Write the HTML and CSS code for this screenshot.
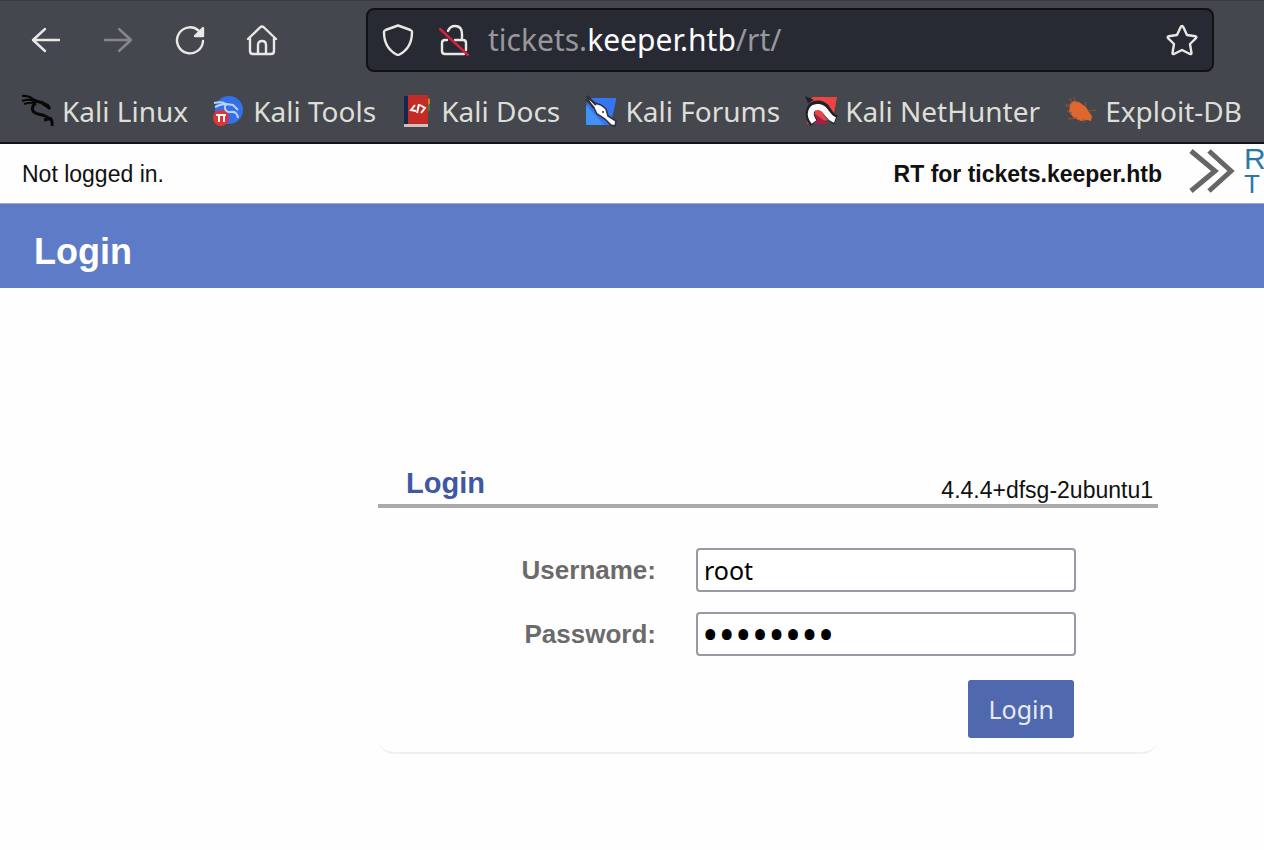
FILE: index.html
```html
<!DOCTYPE html>
<html lang="en">
<head>
<meta charset="utf-8">
<title>Login</title>
<link rel="stylesheet" href="styles.css">
</head>
<body>
<header class="chrome">
  <div class="toolbar">
    <nav class="nav-buttons" aria-label="Browser">
      <button class="icon-button" aria-label="Back"><svg viewBox="0 0 32 32" width="32" height="32"><path d="M29 16H3M15 5 3 16l12 11"/></svg></button>
      <button class="icon-button dim" aria-label="Forward" disabled><svg viewBox="0 0 32 32" width="32" height="32"><path d="M3 16h26M17 5l12 11-12 11"/></svg></button>
      <button class="icon-button" aria-label="Reload"><svg viewBox="0 0 32 32" width="32" height="32"><path d="M29 17A13 13 0 1 1 24.500 6.500"/><path class="solid" d="M29 4v8h-8z"/></svg></button>
      <button class="icon-button" aria-label="Home"><svg viewBox="0 0 32 32" width="32" height="32"><path d="M2 15 14.500 3q1.500-1.200 3 0L30 15M4 14v13q0 3 3 3h18q3 0 3-3V14M12 30V21q0-4 4-4t4 4v9"/></svg></button>
    </nav>
    <div class="address">
      <svg class="address-icon" viewBox="0 0 32 32" width="32" height="32"><path d="M16 1.500 28.500 6q1.500.6 1.500 2c0 11-4 18-12.500 22.500q-1.500.8-3 0C6 26 2 19 2 8q0-1.400 1.500-2z"/></svg>
      <svg class="address-icon" viewBox="0 0 32 32" width="32" height="32"><path d="M10 7q2-5 7-5 7 0 7 8v6M9 16H7q-3 0-3 3v8q0 3 3 3h19M17 16h8q3 0 3 3v7"/><path class="slash" d="M2 5l28 26"/></svg>
      <div class="url" role="textbox" aria-label="Address" tabindex="0">tickets.<span class="domain">keeper.htb</span>/rt/</div>
      <button class="icon-button" aria-label="Bookmark this page"><svg viewBox="0 0 32 32" width="32" height="32"><path d="M16 2q.8 0 1.300 1L21 11l8.500 1.300q1.500.5.500 1.800L24 20l1.500 9q0 1.500-1.500 1L16 26l-8 4q-1.500.5-1.500-1L8 20l-6-5.900q-1-1.300.500-1.800L11 11l3.700-8q.5-1 1.300-1z"/></svg></button>
    </div>
  </div>
  <nav class="bookmarks" aria-label="Bookmarks">
    <a class="bookmark" href="#"><svg viewBox="0 0 32 32" width="32" height="32" fill="none" stroke="#080808"><path stroke-width="2" d="M0 1q8-1 14 6M0 6q8-3 14 1M2 9q6-2 12-1"/><path stroke-width="3" d="M11 5q8 2 13 5l4 4M14 8q-5 3-3 8c3 5 12 2 16 8l-5 1M27 23q4 1 3 8"/><path fill="#080808" d="m19 6 2 4 7 4-1-4z"/></svg>Kali Linux</a>
    <a class="bookmark" href="#"><svg viewBox="0 0 32 32" width="32" height="32"><circle cx="16" cy="15" r="14" fill="#3470e8"/><path d="M1 8q8-2 12 1l7 1 5 5M2 12q8-4 12-2M12 10q-1 8 6 7 6-1 7 6" fill="none" stroke="#b9d3ff" stroke-width="2"/><circle cx="8" cy="23" r="8" fill="#df3432"/><path d="M3 20h10M6 20v7M11 20v7" stroke="#fff" stroke-width="2"/></svg>Kali Tools</a>
    <a class="bookmark" href="#"><svg viewBox="0 0 32 32" width="32" height="32"><path d="M3 1h6v29H3z" fill="#152653"/><path d="M7 0h20v29H7z" fill="#c52b25"/><path d="m27 3 2 1v5l-2 1z" fill="#c88231"/><path d="M27 10h2v5l-2 2z" fill="#37833d"/><path d="M3 29h24v3H3z" fill="#d5bdbb"/><path d="m14 10-4 5 5 1M18 9l-2 9M19 10l5 3-4 5" fill="none" stroke="#fff" stroke-width="2"/></svg>Kali Docs</a>
    <a class="bookmark" href="#"><svg viewBox="0 0 32 32" width="32" height="32"><path d="M2 3h28q2 0 1 2l-5 23q0 2-2 2H2q-2 0-1-2z" fill="#3475f4"/><path d="M1 10v18q0 2 2 2h16z" fill="#4291f7"/><path d="m2 1 3 7 4 5 3 6 8 5 6 6 4 1 1-5-8-5-2-7-5-4-6-2z" fill="#fff" stroke="#303136" stroke-width="1.500"/><path d="m2 1 9 9M1 4l8 9" stroke="#303136" stroke-width="2"/><circle cx="18" cy="17" r="1" fill="#303136"/></svg>Kali Forums</a>
    <a class="bookmark" href="#"><svg viewBox="0 0 32 32" width="32" height="32"><path d="M7 2h25l-4 22L2 29z" fill="#eb4542"/><path d="m10 19 14 10H10z" fill="#a51f47"/><path d="M9 28C2 20 5 9 14 10c9 1 7 11 17 15" fill="none" stroke="#202126" stroke-width="9"/><path d="M9 27C3 19 6 11 14 12c8 1 7 10 16 13" fill="none" stroke="#fff" stroke-width="6"/><path d="m0 1 9 4-6 3" fill="#202126"/></svg>Kali NetHunter</a>
    <a class="bookmark" href="#"><svg viewBox="0 0 32 32" width="32" height="32"><path d="m5 10 3-4 6 1 7 5 3 5 3 4-1 5-4-1-6 1-7-3-5-6z" fill="#dd672c"/><path d="M7 8 5 3M13 8l-5-6M20 12l1-5M23 16l8-1M5 12l-5-3M7 18l-5-2M12 23l-9 1M18 24l2 4M6 8 1 12" fill="none" stroke="#985135" stroke-width="1"/></svg>Exploit-DB</a>
  </nav>
</header>
<div class="status">
  <span>Not logged in.</span>
  <div class="brand">
    <strong>RT for tickets.keeper.htb</strong>
    <svg class="arrows" viewBox="0 0 46 44" width="46" height="44"><path d="m2 2 24 20L2 42M20 2l22 20-22 20"/></svg>
    <span class="logo"><span class="logo-top">R</span><span class="logo-bottom">T</span></span>
  </div>
</div>
<h1 class="title">Login</h1>
<main class="main">
  <section class="panel">
    <div class="panel-head">
      <h2>Login</h2>
      <span>4.4.4+dfsg-2ubuntu1</span>
    </div>
    <form class="form">
      <label for="user">Username:</label>
      <input id="user" type="text" value="root">
      <label for="pass">Password:</label>
      <input id="pass" class="secret" type="password" value="password">
      <button class="submit" type="button">Login</button>
    </form>
  </section>
</main>
</body>
</html>
```
FILE: styles.css
```css
* { box-sizing: border-box; }
body {
  margin: 0;
  background: #fefefe;
  color: #111;
  font: 23px/28px "Liberation Sans", Arial, sans-serif;
  overflow-x: hidden;
}
button { padding: 0; border: 0; background: none; }
svg { display: block; flex: none; overflow: visible; }

.chrome {
  background: #45474e;
  border-top: 1px solid #393b40;
  border-bottom: 2px solid #151518;
  font-family: "Noto Sans", sans-serif;
}
.toolbar {
  display: flex;
  align-items: center;
  gap: 88px;
  padding: 7px 50px 7px 30px;
}
.nav-buttons { display: flex; gap: 40px; }
.icon-button svg, .address-icon {
  fill: none;
  stroke: #e8e8e5;
  stroke-width: 2.4;
  stroke-linecap: round;
  stroke-linejoin: round;
}
.icon-button .solid { fill: #efefeb; }
.icon-button.dim svg { stroke: #84868a; }
.address {
  flex: 1;
  display: flex;
  align-items: center;
  height: 64px;
  padding: 0 14px;
  gap: 24px;
  border: 2px solid #111216;
  border-radius: 8px;
  background: #282a33;
}
.address-icon .slash { stroke: #d9203f; }
.url {
  flex: 1;
  margin-left: -6px;
  color: #97989b;
  font-size: 30px;
  line-height: 40px;
  white-space: nowrap;
}
.domain { color: #fbfbfe; }
.bookmarks {
  display: flex;
  align-items: center;
  justify-content: space-between;
  height: 63px;
  padding: 0 22px;
}
.bookmark {
  display: flex;
  align-items: center;
  gap: 8px;
  color: #deded9;
  font-size: 28px;
  line-height: 36px;
  text-decoration: none;
  white-space: nowrap;
}

.status {
  display: flex;
  align-items: center;
  justify-content: space-between;
  height: 60px;
  padding-left: 22px;
  border-bottom: 1px solid #aaa;
}
.brand { display: flex; align-items: center; }
.arrows { margin: 0 9px 6px 27px; fill: none; stroke: #666; stroke-width: 5; }
.logo {
  display: flex;
  flex-direction: column;
  width: 20px;
  padding-bottom: 6px;
  color: #2879a8;
}
.logo-top { font-size: 30px; line-height: 26px; }
.logo-bottom { font-size: 26px; line-height: 24px; }
.title {
  margin: 0;
  padding: 28px 34px 16px;
  background: #5e7bc7;
  color: #fff;
  font-size: 36px;
  line-height: 40px;
}

.main { padding: 178px 106px 0 378px; }
.panel {
  padding-bottom: 14px;
  border-bottom: 2px solid #efeff0;
  border-radius: 0 0 16px 16px;
}
.panel-head {
  display: flex;
  align-items: flex-end;
  justify-content: space-between;
  padding: 0 5px 0 28px;
  border-bottom: 4px solid #aaa;
}
.panel-head h2 {
  margin: 0;
  padding-bottom: 4px;
  color: #3f58a2;
  font-size: 29px;
  line-height: 34px;
}
.form {
  display: grid;
  grid-template-columns: 1fr 380px;
  column-gap: 40px;
  row-gap: 20px;
  align-items: center;
  padding: 40px 82px 0 0;
}
.form label {
  color: #6b6b6b;
  font-size: 26px;
  font-weight: bold;
  text-align: right;
}
.form input {
  width: 100%;
  height: 44px;
  padding: 0 6px;
  border: 2px solid #9998a5;
  border-radius: 4px;
  background: #fff;
  color: #000;
  font: 25px/36px "Noto Sans", sans-serif;
}
.form .secret {
  padding: 0 4px;
  font: 44px/36px "Noto Sans", sans-serif;
}
.submit {
  grid-column: 2;
  justify-self: end;
  margin: 4px 2px 0;
  padding: 11px 20px;
  border-radius: 3px;
  background: #4f68ae;
  color: #e6eaf5;
  font: 25px/36px "Noto Sans", sans-serif;
}
```
